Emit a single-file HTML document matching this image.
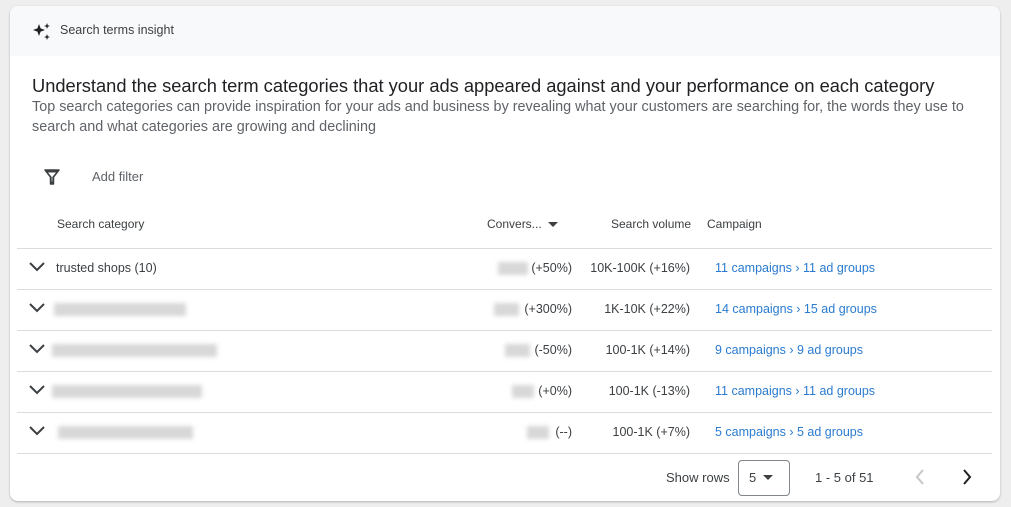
<!DOCTYPE html><html><head><style>
body{margin:0;width:1011px;height:507px;background:#eeeeee;font-family:"Liberation Sans",Arial,sans-serif;position:relative;overflow:hidden}
.card{position:absolute;left:10px;top:6px;width:990px;height:495px;background:#fff;border-radius:8px;box-shadow:0 1px 2px rgba(0,0,0,.25);overflow:hidden}
.hdr{height:50px;background:#f8f9fa;position:relative}
.a{position:absolute;white-space:nowrap}
.t{color:#3c4043}
.line{position:absolute;left:7px;width:975px;height:1px;background:#dadce0}
.blur{position:absolute;background:#d8d8d8;filter:blur(2px);height:13px}
.lk{color:#2a7bd0;font-size:12.5px}
.n{font-size:12.5px;color:#3c4043;text-align:right;width:200px}
</style></head><body>
<div class="card">
<div class="hdr">
<svg class="a" style="left:22px;top:16px" width="20" height="20" viewBox="0 0 20 20"><path d="M7 2 L8.6 6.4 L13 8 L8.6 9.6 L7 14 L5.4 9.6 L1 8 L5.4 6.4Z" fill="#202124"/><path d="M15 1 L15.8 3.2 L18 4 L15.8 4.8 L15 7 L14.2 4.8 L12 4 L14.2 3.2Z" fill="#202124"/><path d="M15 12 L15.8 14.2 L18 15 L15.8 15.8 L15 18 L14.2 15.8 L12 15 L14.2 14.2Z" fill="#202124"/></svg>
<div class="a t" style="left:50px;top:17px;font-size:12.5px">Search terms insight</div>
</div>
<div class="a" style="left:22px;top:69px;font-size:18.3px;color:#202124">Understand the search term categories that your ads appeared against and your performance on each category</div>
<div class="a" style="left:22px;top:91px;font-size:14.4px;color:#5f6368;line-height:20px">Top search categories can provide inspiration for your ads and business by revealing what your customers are searching for, the words they use to<br>search and what categories are growing and declining</div>
<svg class="a" style="left:33px;top:162px" width="18" height="18" viewBox="0 0 18 18"><path d="M2 2H16L10.5 9V16H7.5V9Z" fill="#3c4043" stroke="#3c4043" stroke-width="1.5" stroke-linejoin="round"/><path d="M5 4.5H13L9.3 9V13.5H8.7V9Z" fill="#fff"/></svg>
<div class="a" style="left:82px;top:163px;font-size:13px;color:#5f6368">Add filter</div>
<div class="a t" style="left:47px;top:211px;font-size:12px">Search category</div>
<div class="a t" style="left:477px;top:211px;font-size:12px">Convers...</div>
<svg class="a" style="left:538px;top:216px" width="10" height="6"><path d="M0 0H10L5 5Z" fill="#3c4043"/></svg>
<div class="a t" style="left:601px;top:211px;font-size:12px">Search volume</div>
<div class="a t" style="left:697px;top:211px;font-size:12px">Campaign</div>
<div class="line" style="top:242px"></div>
<div class="line" style="top:283px"></div>
<div class="line" style="top:324px"></div>
<div class="line" style="top:365px"></div>
<div class="line" style="top:406px"></div>
<div class="line" style="top:447px"></div>
<svg class="a" style="left:19px;top:256px" width="16" height="10"><path d="M1 1L8 8L15 1" fill="none" stroke="#3c4043" stroke-width="2"/></svg>
<svg class="a" style="left:19px;top:297px" width="16" height="10"><path d="M1 1L8 8L15 1" fill="none" stroke="#3c4043" stroke-width="2"/></svg>
<svg class="a" style="left:19px;top:338px" width="16" height="10"><path d="M1 1L8 8L15 1" fill="none" stroke="#3c4043" stroke-width="2"/></svg>
<svg class="a" style="left:19px;top:379px" width="16" height="10"><path d="M1 1L8 8L15 1" fill="none" stroke="#3c4043" stroke-width="2"/></svg>
<svg class="a" style="left:19px;top:420px" width="16" height="10"><path d="M1 1L8 8L15 1" fill="none" stroke="#3c4043" stroke-width="2"/></svg>
<div class="a t" style="left:46px;top:255px;font-size:12.5px">trusted shops (10)</div>
<div class="blur" style="left:44px;top:297px;width:132px"></div>
<div class="blur" style="left:42px;top:338px;width:165px"></div>
<div class="blur" style="left:42px;top:379px;width:150px"></div>
<div class="blur" style="left:48px;top:420px;width:135px"></div>
<div class="blur" style="left:488px;top:256px;width:30px"></div>
<div class="blur" style="left:484px;top:297px;width:25px"></div>
<div class="blur" style="left:495px;top:338px;width:25px"></div>
<div class="blur" style="left:502px;top:379px;width:22px"></div>
<div class="blur" style="left:517px;top:420px;width:22px"></div>
<div class="a n" style="left:362px;top:255px">(+50%)</div>
<div class="a n" style="left:362px;top:296px">(+300%)</div>
<div class="a n" style="left:362px;top:337px">(-50%)</div>
<div class="a n" style="left:362px;top:378px">(+0%)</div>
<div class="a n" style="left:362px;top:419px">(--)</div>
<div class="a n" style="left:480px;top:255px">10K-100K (+16%)</div>
<div class="a n" style="left:480px;top:296px">1K-10K (+22%)</div>
<div class="a n" style="left:480px;top:337px">100-1K (+14%)</div>
<div class="a n" style="left:480px;top:378px">100-1K (-13%)</div>
<div class="a n" style="left:480px;top:419px">100-1K (+7%)</div>
<div class="a lk" style="left:705px;top:255px">11 campaigns › 11 ad groups</div>
<div class="a lk" style="left:705px;top:296px">14 campaigns › 15 ad groups</div>
<div class="a lk" style="left:705px;top:337px">9 campaigns › 9 ad groups</div>
<div class="a lk" style="left:705px;top:378px">11 campaigns › 11 ad groups</div>
<div class="a lk" style="left:705px;top:419px">5 campaigns › 5 ad groups</div>
<div class="a t" style="left:656px;top:464px;font-size:13px">Show rows</div>
<div class="a" style="left:728px;top:454px;width:50px;height:34px;border:1px solid #80868b;border-radius:4px"></div>
<div class="a t" style="left:739px;top:464px;font-size:13px">5</div>
<svg class="a" style="left:753px;top:469px" width="10" height="6"><path d="M0 0H10L5 5Z" fill="#3c4043"/></svg>
<div class="a t" style="left:805px;top:464px;font-size:13px">1 - 5 of 51</div>
<svg class="a" style="left:905px;top:463px" width="10" height="16"><path d="M8 1L2 8L8 15" fill="none" stroke="#c4c7c5" stroke-width="2"/></svg>
<svg class="a" style="left:952px;top:463px" width="10" height="16"><path d="M2 1L8 8L2 15" fill="none" stroke="#202124" stroke-width="2"/></svg>
</div>
</body></html>
